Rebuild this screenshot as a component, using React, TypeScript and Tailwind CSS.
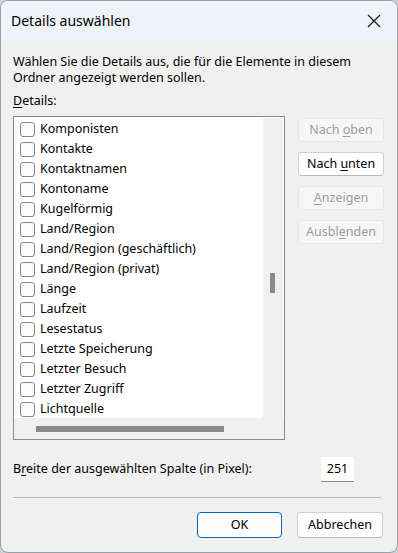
const items = [
  "Komponisten",
  "Kontakte",
  "Kontaktnamen",
  "Kontoname",
  "Kugelförmig",
  "Land/Region",
  "Land/Region (geschäftlich)",
  "Land/Region (privat)",
  "Länge",
  "Laufzeit",
  "Lesestatus",
  "Letzte Speicherung",
  "Letzter Besuch",
  "Letzter Zugriff",
  "Lichtquelle",
];

const SideButton = ({
  label,
  enabled = false,
}: {
  label: [string, string, string];
  enabled?: boolean;
}) => (
  <button
    type="button"
    className={
      enabled
        ? "h-[24px] w-[86px] rounded-[4px] border border-[#d0d0d0] border-b-[#b8b8b8] bg-white text-[12.5px] text-black"
        : "h-[24px] w-[86px] rounded-[4px] border border-[#e6e6e6] bg-[#f6f6f6] text-[12.5px] text-[#9d9d9d]"
    }
  >
    {label[0]}
    <span className="underline underline-offset-2">{label[1]}</span>
    {label[2]}
  </button>
);

export default function App() {
  return (
    <div
      className="h-[553px] w-[398px] bg-[#c9d0d8]"
      style={{ fontFamily: '"Noto Sans", "Open Sans", sans-serif' }}
    >
      <div className="flex h-full flex-col overflow-hidden rounded-[8px] border border-[#9aa0a6] bg-[#f0f0f0]">
        {/* title bar */}
        <div className="flex h-[39px] shrink-0 items-center justify-between bg-[#eef3f8] pl-[10px] pr-[16px]">
          <span className="text-[14px] text-black">Details auswählen</span>
          <svg width="14" height="14" viewBox="0 0 14 14">
            <path d="M1 1 L13 13 M13 1 L1 13" stroke="#1a1a1a" strokeWidth="1.2" />
          </svg>
        </div>

        <div className="flex flex-1 flex-col pl-[12px] text-[12.5px] text-black">
          <p className="mt-[14px] leading-[16px]">
            Wählen Sie die Details aus, die für die Elemente in diesem
            <br />
            Ordner angezeigt werden sollen.
          </p>
          <div className="mt-[7px] leading-[16px]">
            <span className="underline underline-offset-2">D</span>etails:
          </div>

          <div className="mt-[7px] flex">
            {/* list box */}
            <div className="flex h-[324px] w-[272px] flex-col border border-[#858a90] bg-white">
              <div className="flex flex-1 overflow-hidden">
                <ul className="flex-1 pt-[2px]">
                  {items.map((item) => (
                    <li key={item} className="flex h-[20px] items-center">
                      <span className="ml-[6px] h-[15px] w-[15px] rounded-[3px] border border-[#878787] bg-[#fbfbfb]" />
                      <span className="ml-[5px] leading-none">{item}</span>
                    </li>
                  ))}
                </ul>
                <div className="mr-[1px] mt-[1px] flex w-[20px] flex-col bg-[#f0f0f0] pl-[7px] pt-[155px]">
                  <div className="h-[20px] w-[5px] bg-[#8a8a8a]" />
                </div>
              </div>
              <div className="flex h-[21px] shrink-0 items-center bg-[#f0f0f0] pl-[22px]">
                <div className="h-[6px] w-[188px] bg-[#8a8a8a]" />
              </div>
            </div>

            {/* side buttons */}
            <div className="ml-[13px] flex flex-col gap-[10px] pt-[2px]">
              <SideButton label={["Nach ", "o", "ben"]} />
              <SideButton label={["Nach ", "u", "nten"]} enabled />
              <SideButton label={["", "A", "nzeigen"]} />
              <SideButton label={["Ausbl", "e", "nden"]} />
            </div>
          </div>

          <div className="mt-[17px] flex h-[25px] items-center">
            <span className="w-[308px]">
              B<span className="underline underline-offset-2">r</span>eite der ausgewählten Spalte (in Pixel):
            </span>
            <div className="flex h-[25px] w-[33px] items-center justify-center border-b border-[#8a8a8a] bg-white">
              251
            </div>
          </div>

          <div className="mt-[15px] h-px w-[368px] bg-[#bcbcbc]" />

          <div className="mt-[14px] flex w-[370px] justify-end gap-[15px]">
            <button
              type="button"
              className="h-[26px] w-[85px] rounded-[4px] border border-[#0067c0] bg-[#fdfdfd] text-[12.5px] text-black"
            >
              OK
            </button>
            <button
              type="button"
              className="h-[26px] w-[86px] rounded-[4px] border border-[#d0d0d0] border-b-[#b8b8b8] bg-[#fdfdfd] text-[12.5px] text-black"
            >
              Abbrechen
            </button>
          </div>
        </div>
      </div>
    </div>
  );
}
